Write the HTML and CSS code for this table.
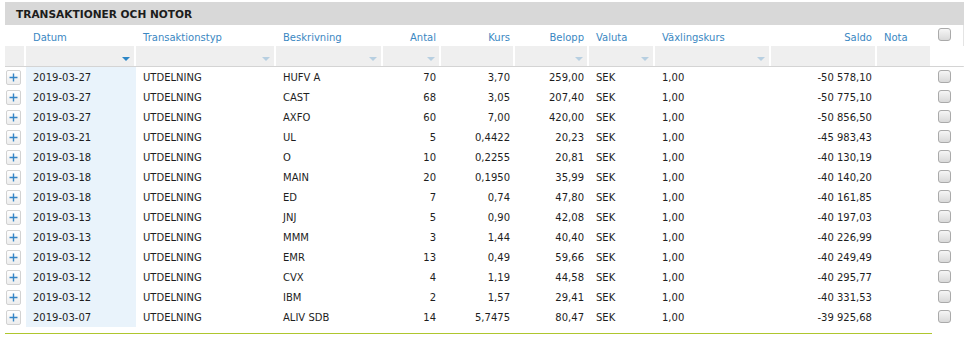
FILE: index.html
```html
<!DOCTYPE html>
<html lang="sv">
<head>
  <meta charset="utf-8">
  <title>Transaktioner och notor</title>
  <link rel="stylesheet" href="styles.css">
</head>
<body>
  <div class="panel">
    <div class="rubrik">TRANSAKTIONER OCH NOTOR</div>

    <div class="rad huvud">
      <div></div>
      <div class="cell">Datum</div>
      <div class="cell">Transaktionstyp</div>
      <div class="cell">Beskrivning</div>
      <div class="cell hoger">Antal</div>
      <div class="cell hoger">Kurs</div>
      <div class="cell hoger">Belopp</div>
      <div class="cell">Valuta</div>
      <div class="cell">Växlingskurs</div>
      <div class="cell hoger">Saldo</div>
      <div class="cell">Nota</div>
      <div class="cell kryss"><span class="ruta"></span></div>
    </div>

    <div class="rad filter">
      <div class="f"></div>
      <div class="f"><span class="pil aktiv"></span></div>
      <div class="f"><span class="pil"></span></div>
      <div class="f"><span class="pil"></span></div>
      <div class="f"><span class="pil"></span></div>
      <div class="f"></div>
      <div class="f"><span class="pil"></span></div>
      <div class="f"><span class="pil"></span></div>
      <div class="f"><span class="pil"></span></div>
      <div class="f"></div>
      <div class="f"></div>
      <div class="f tom"></div>
    </div>

    <div id="rader"></div>

    <div class="slut"></div>
  </div>

  <script>
    let data = [
      ["2019-03-27", "HUFV A", "70", "3,70", "259,00", "-50 578,10"],
      ["2019-03-27", "CAST", "68", "3,05", "207,40", "-50 775,10"],
      ["2019-03-27", "AXFO", "60", "7,00", "420,00", "-50 856,50"],
      ["2019-03-21", "UL", "5", "0,4422", "20,23", "-45 983,43"],
      ["2019-03-18", "O", "10", "0,2255", "20,81", "-40 130,19"],
      ["2019-03-18", "MAIN", "20", "0,1950", "35,99", "-40 140,20"],
      ["2019-03-18", "ED", "7", "0,74", "47,80", "-40 161,85"],
      ["2019-03-13", "JNJ", "5", "0,90", "42,08", "-40 197,03"],
      ["2019-03-13", "MMM", "3", "1,44", "40,40", "-40 226,99"],
      ["2019-03-12", "EMR", "13", "0,49", "59,66", "-40 249,49"],
      ["2019-03-12", "CVX", "4", "1,19", "44,58", "-40 295,77"],
      ["2019-03-12", "IBM", "2", "1,57", "29,41", "-40 331,53"],
      ["2019-03-07", "ALIV SDB", "14", "5,7475", "80,47", "-39 925,68"]
    ];

    let plus = '<svg width="9" height="9" viewBox="0 0 9 9"><path d="M4.5 0.5v8M0.5 4.5h8" stroke="#3585c6" stroke-width="1.4" fill="none"/></svg>';

    let rader = document.getElementById("rader");
    let html = "";
    for (let i = 0; i < data.length; i++) {
      let d = data[i];
      html += '<div class="rad data">' +
        '<div><span class="plus">' + plus + '</span></div>' +
        '<div class="cell datum">' + d[0] + '</div>' +
        '<div class="cell">UTDELNING</div>' +
        '<div class="cell">' + d[1] + '</div>' +
        '<div class="cell hoger">' + d[2] + '</div>' +
        '<div class="cell hoger">' + d[3] + '</div>' +
        '<div class="cell hoger">' + d[4] + '</div>' +
        '<div class="cell">SEK</div>' +
        '<div class="cell">1,00</div>' +
        '<div class="cell hoger">' + d[5] + '</div>' +
        '<div class="cell"></div>' +
        '<div class="cell kryss"><span class="ruta"></span></div>' +
        '</div>';
    }
    rader.innerHTML = html;
  </script>
</body>
</html>
```

FILE: styles.css
```css
* {
  margin: 0;
  padding: 0;
  box-sizing: border-box;
}

body {
  font-family: "DejaVu Sans", Verdana, sans-serif;
  font-size: 10px;
  color: #1e1e1e;
  background: #fff;
}

.panel {
  width: 959px;
  margin: 2px 0 0 5px;
}

.rubrik {
  height: 23px;
  line-height: 24px;
  padding-left: 11px;
  background: #d8d8d8;
  font-weight: bold;
  font-size: 10.6px;
  color: #1c1c1c;
}

.rad {
  display: grid;
  grid-template-columns: 21px 110px 140px 107px 58px 74px 74px 66px 116px 106px 55px 32px;
}

.cell {
  padding: 0 5px 0 7px;
  white-space: nowrap;
  overflow: hidden;
}

.hoger {
  text-align: right;
}

.huvud {
  height: 21px;
  line-height: 25px;
  color: #3a87c2;
  border-right: 1px solid #e4e4e4;
}

.filter {
  height: 21px;
  border-bottom: 1px solid #d4d4d4;
  border-right: 1px solid #e4e4e4;
}

.f {
  background: #efefef;
  border-right: 2px solid #fff;
  display: flex;
  justify-content: flex-end;
  align-items: flex-end;
  padding: 0 4px 5px 0;
}

.f.tom {
  background: #fff;
  border-right: none;
}

.pil {
  width: 0;
  height: 0;
  border-left: 4px solid transparent;
  border-right: 4px solid transparent;
  border-top: 4px solid #b7cfe1;
}

.pil.aktiv {
  border-top-color: #2d86c6;
}

.data {
  height: 20px;
  line-height: 21px;
}

.datum {
  background: #e9f3fb;
}

.plus {
  display: flex;
  align-items: center;
  justify-content: center;
  width: 15px;
  height: 15px;
  margin: 3px 0 0 1px;
  border: 1px solid #d2d2d2;
  border-radius: 2px;
  background: linear-gradient(#ffffff, #ededed);
}

.plus svg {
  display: block;
}

.kryss {
  padding: 0 0 0 6px;
}

.ruta {
  display: block;
  width: 13px;
  height: 13px;
  margin-top: 3px;
  border: 1px solid #aaaaaa;
  border-radius: 3px;
  background: linear-gradient(#f6f6f6, #d9d9d9);
}

.slut {
  width: 927px;
  margin-top: 6px;
  border-top: 1px solid #afc62e;
}
```
